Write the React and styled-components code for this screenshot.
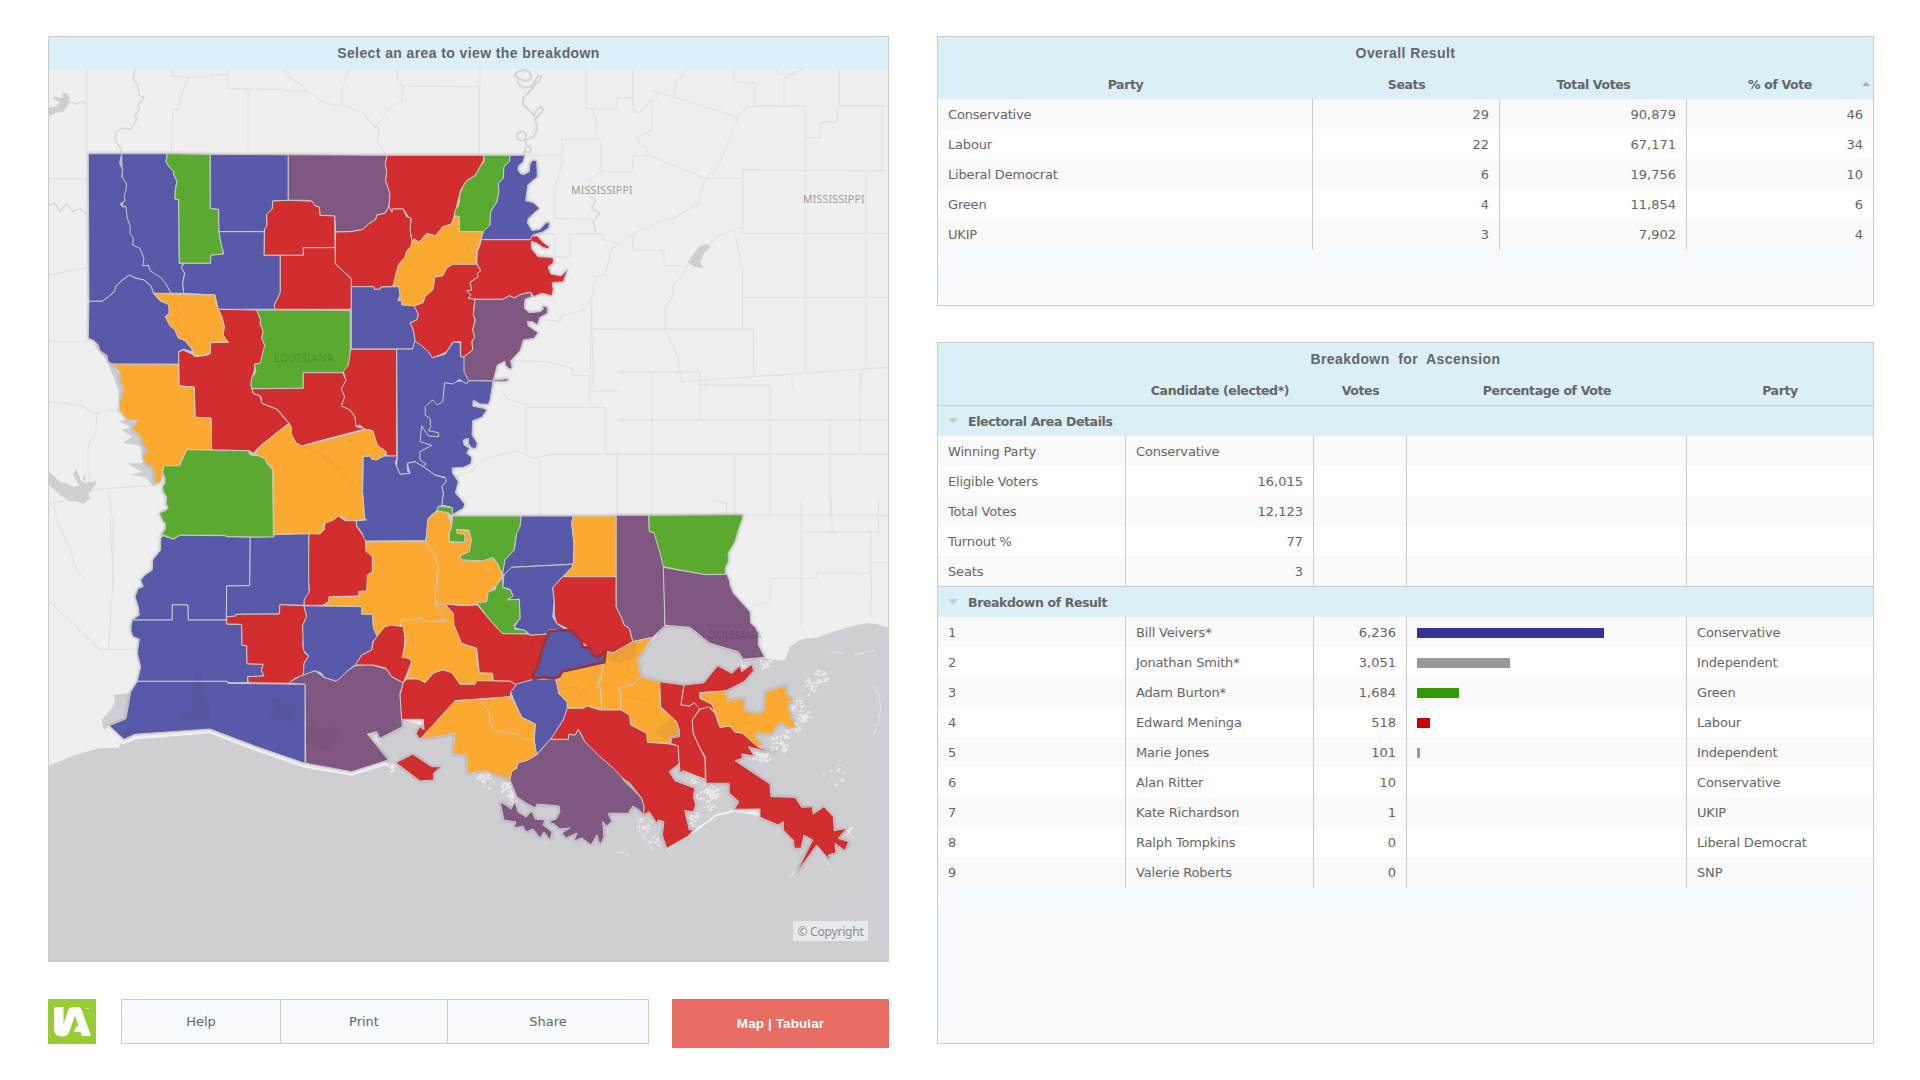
import React from "react";
import styled, { createGlobalStyle } from "styled-components";

const GlobalStyle = createGlobalStyle`
  body {
    margin: 0;
    background: #fff;
    color: #666;
    font-family: Verdana, "DejaVu Sans", sans-serif;
    font-size: 13px;
  }
`;

/* ---------- map data ---------- */

// Each outline is a list of points; a letter selects the survey sheet they are measured on.
const SHEETS = {
  A: [40, 30, 3],
  B: [460, 30, 3],
  C: [40, 340, 3],
  D: [320, 300, 3],
  E: [100, 520, 3],
  F: [360, 490, 3],
  G: [600, 500, 3],
  P: [0, 0, 1],
};

function points(outline) {
  let sheet = SHEETS.P;
  const out = [];
  const tokens = outline.trim().split(/\s+/);
  for (let i = 0; i < tokens.length; ) {
    if (SHEETS[tokens[i]]) {
      sheet = SHEETS[tokens[i]];
      i += 1;
      continue;
    }
    const x = sheet[0] + Number(tokens[i]) / sheet[2];
    const y = sheet[1] + Number(tokens[i + 1]) / sheet[2];
    out.push(`${x.toFixed(1)},${y.toFixed(1)}`);
    i += 2;
  }
  return out.join(" ");
}

const FILL = {
  blue: "#5959a9",
  red: "#d22e2f",
  green: "#5aaa31",
  orange: "#fba931",
  purple: "#805780",
};

const AREAS = [
  ["blue", "A 245 371 382 371 378 395 388 412 402 425 400 432 411 453 406 480 405 507 416 509 418 700 431 703 424 712 434 730 428 760 431 790 393 790 300 700 250 600"],
  ["blue", "A 145 371 245 371 239 400 248 420 245 440 252 450 260 462 257 485 252 500 256 512 241 522 249 532 257 528 262 565 271 590 270 610 280 625 278 645 300 655 312 685 308 708 325 705 330 722 350 735 365 745 380 765 393 790 340 790 333 768 312 750 285 744 268 735 248 750 230 766 222 786 205 800 187 814 147 814"],
  ["green", "A 382 371 510 373 511 535 536 538 537 605 543 640 551 672 512 676 512 700 418 700 416 509 405 507 406 480 411 453 400 432 402 425 388 412 378 395"],
  ["blue", "A 511 373 745 374 745 511 698 513 697 537 680 553 681 587 674 597 673 605 537 605 536 538 511 535"],
  ["purple", "A 745 374 1042 376 1036 400 1040 425 1037 452 1050 490 1047 527 1035 550 1010 555 1008 567 985 583 967 599 930 605 887 606 884 558 840 556 838 531 826 528 816 514 800 511 745 511"],
  ["red", "A 1042 376 1332 376 1330 392 1320 410 1306 436 1280 452 1262 480 1243 557 1235 582 1208 590 1187 617 1160 611 1137 637 1123 627 1116 635 1110 600 1113 565 1106 562 1090 537 1057 537 1056 547 1047 530 1050 490 1037 452 1040 425 1036 400"],
  ["green", "B 72 376 151 376 148 395 132 410 130 445 115 460 117 485 111 515 92 545 90 585 70 605 A 1258 605 1258 560 1243 557 1246 540 1257 525 1260 490 1270 468 1280 452 B 46 436 60 410 72 395"],
  ["blue", "B 151 376 194 376 190 395 175 408 174 420 180 430 190 434 208 425 210 402 218 390 230 393 232 440 203 465 197 512 220 518 238 535 205 565 202 578 216 602 240 598 258 578 268 578 266 594 248 606 220 614 212 629 62 629 70 605 90 585 92 545 111 515 117 485 115 460 130 445 132 410 148 395"],
  ["red", "B 62 629 212 629 216 618 232 618 250 638 268 650 264 656 248 652 232 640 214 634 214 655 234 680 270 682 281 686 279 700 264 710 272 732 304 738 323 717 310 755 276 758 280 778 275 798 250 790 238 792 222 800 212 787 183 793 163 804 148 797 128 808 34 808 25 800 32 795 20 782 35 780 30 757 54 740 52 730 62 722 50 700 52 665 62 640"],
  ["orange", "A 1243 558 1258 560 1258 605 B 70 605 62 629 50 665 50 703 A 1238 703 1220 715 1208 738 1185 741 1178 780 1155 800 1150 818 1130 823 1122 828 1085 825 1085 812 1074 812 1080 795 1074 770 1058 768 1075 705 1095 680 1100 663 1112 650 1123 627 1137 637 1160 611 1187 617 1208 590 1235 582"],
  ["red", "A 887 606 930 605 967 599 985 583 1008 567 1010 555 1035 550 1047 530 1056 547 1057 537 1090 537 1100 560 1113 565 1110 600 1116 635 1112 650 1100 663 1095 680 1075 705 1058 770 1022 771 1020 778 1003 778 1001 770 934 770 934 746 886 702 885 655"],
  ["red", "A 698 513 745 511 800 513 816 514 826 528 838 531 840 556 884 558 885 653 790 653 790 676 672 676 674 597 681 587 680 553 697 537"],
  ["blue", "A 537 605 673 605 672 676 721 676 721 788 703 825 705 838 535 838 525 795 431 790 428 760 434 730 424 712 431 703 418 700 512 700 512 676 551 672 543 640"],
  ["red", "A 721 676 790 676 790 653 885 653 886 702 934 746 934 838 705 838 703 825 721 788"],
  ["red", "A 1122 828 1150 818 1155 800 1178 780 1185 741 1208 738 1220 715 1238 703 B 50 703 62 722 52 730 54 740 30 757 35 780 20 782 32 795 25 805 45 808 40 855 46 870 38 900 44 920 36 935 38 960 10 982 2 980 2 935 A 1238 937 1220 965 1200 975 1177 983 1160 965 1140 945 1124 935 1120 900 1110 878 1130 870 1135 853"],
  ["blue", "A 934 770 1001 770 1003 778 1020 778 1022 771 1076 770 1080 795 1074 812 1085 812 1085 825 1122 828 1135 853 1130 870 1110 878 1120 900 1126 935 1118 957 934 957"],
  ["purple", "B 45 808 128 808 148 797 163 804 183 793 212 787 214 800 195 808 193 835 208 848 240 845 250 838 248 828 262 832 262 850 240 862 232 885 220 876 202 874 205 888 234 908 222 925 190 930 180 962 152 992 156 1012 150 1018 138 1008 134 994 112 1005 100 1050 146 1046 140 1054 25 1052 10 1030 10 982 38 960 36 935 44 920 38 900 46 870 40 855"],
  ["blue", "A 147 814 187 814 205 800 222 786 230 766 248 750 268 735 285 744 312 750 333 768 340 790 360 812 388 824 388 850 377 860 400 890 420 925 440 935 455 955 457 965 430 958 416 965 416 1003 218 1003 C 205 65 200 45 180 32 175 15 160 0 A 158 930 145 925"],
  ["red", "A 535 838 650 840 662 870 660 880 670 905 665 925 676 950 673 970 665 1000 C 660 70 645 72 642 95 635 115 632 135 640 160 660 168 666 190 710 208 747 250 720 270 690 295 660 318 640 340 628 332 515 330 513 234 465 232 463 141 417 138 416 35 430 30 455 42 465 50 505 45 511 8 565 7 A 549 915 553 890 545 860"],
  ["orange", "A 340 790 525 795 527 812 535 838 545 860 553 890 549 915 565 937 512 937 511 972 495 970 490 978 462 975 455 955 440 940 435 930 415 925 405 900 390 888 376 860 388 850 386 824 360 812"],
  ["green", "A 650 840 931 841 931 985 D 88 185 80 210 68 218 C 790 98 790 145 637 146 632 135 635 115 648 95 643 72 660 70 673 20 A 676 950 665 925 670 905 660 880 662 870"],
  ["red", "C 637 146 790 145 790 98 908 98 D 78 240 68 270 74 290 66 315 90 330 105 350 108 380 138 386 0 422 C 785 318 765 308 755 285 753 260 747 250 712 208 666 190 662 168 640 160"],
  ["red", "D 92 148 230 148 230 468 200 468 198 455 170 435 158 392 135 388 120 375 108 378 105 350 90 330 64 318 74 290 64 268 78 240 70 215 85 195"],
  ["blue", "D 446 242 519 243 510 300 505 313 480 312 460 300 458 318 490 325 500 330 485 352 458 362 456 405 472 430 468 445 455 444 445 430 445 415 430 420 432 435 448 445 440 460 455 472 452 492 430 502 396 504 398 520 415 545 406 578 434 612 430 625 395 645 395 622 365 615 370 580 365 560 378 545 375 532 345 525 308 500 295 480 295 380 312 300 366 300 374 246"],
  ["blue", "D 230 147 278 147 284 123 300 133 325 155 337 173 375 163 400 126 420 128 422 170 432 172 432 215 446 242 440 252 418 238 400 252 374 248 368 305 352 315 338 300 316 320 315 345 330 355 332 380 325 392 355 398 356 410 325 408 305 378 300 425 335 436 300 455 300 480 318 492 308 500 285 485 262 490 262 512 270 520 240 523 230 500 232 470"],
  ["orange", "C 216 72 416 73 417 138 463 141 465 232 513 234 515 330 440 329 419 377 373 377 368 395 362 425 350 432 345 425 340 385 318 370 308 350 325 330 310 315 300 285 275 268 292 242 262 240 238 210 240 180 252 150 240 120 240 95"],
  ["orange", "C 747 250 753 260 755 285 768 308 785 318 900 290 D 138 388 158 392 172 435 198 455 192 468 170 480 155 478 150 468 130 468 128 575 134 655 140 660 80 662 72 652 55 648 45 658 15 670 12 690 0 702 C 852 550 857 570 840 582 805 580 702 584 700 390 670 355 645 345 660 318 690 295"],
  ["green", "C 440 329 625 332 630 345 655 347 675 357 680 370 698 390 700 592 558 590 557 586 420 586 400 597 370 585 362 588 377 565 375 548 370 545 358 520 375 512 385 505 378 490 380 470 370 455 368 440 375 430 375 415 368 395 373 377 419 377"],
  ["blue", "D 130 470 150 468 155 478 170 480 192 468 232 468 226 490 240 523 270 520 262 490 285 485 310 500 345 525 378 535 378 545 365 560 370 580 365 615 352 632 340 640 325 655 322 700 316 722 128 723 127 700 108 675 110 662 140 660 134 655 128 575"],
  ["orange", "E 797 65 F 200 155 205 175 225 190 235 235 225 320 230 342 258 392 200 395 178 383 160 390 125 388 122 408 95 405 75 435 50 440 38 430 38 375 E 785 283 785 260 668 256 685 245 685 230 775 228 776 214 800 213 802 165 817 155 817 110 797 93"],
  ["red", "E 626 41 660 42 672 30 675 10 700 0 715 -12 735 2 768 2 770 20 788 45 797 65 797 93 817 110 817 155 802 165 800 213 776 214 775 228 687 230 685 245 668 256 612 256 612 240 628 212 625 180"],
  ["blue", "E 190 47 220 58 240 46 378 47 378 50 451 52 449 197 380 198 379 300 265 300 263 255 217 254 217 300 97 300 118 285 115 260 105 230 115 205 130 200 122 180 135 165 157 150 158 120 182 90 182 55"],
  ["blue", "E 451 52 521 51 522 44 626 41 626 200 628 215 612 240 612 256 540 254 538 282 408 283 407 290 379 290 380 198 449 197"],
  ["blue", "E 97 300 217 300 217 254 263 255 265 300 379 300 380 312 425 313 426 376 440 377 441 431 490 433 484 450 492 468 443 470 443 488 383 488 382 484 112 484 122 440 112 400 118 357 100 350 93 335 93 320"],
  ["purple", "E 562 490 610 462 645 452 672 472 707 483 745 450 766 437 810 433 858 447 F 78 535 95 560 130 578 120 610 127 710 60 745 50 725 22 732 85 810 0 837 E 755 755 617 730 615 493"],
  ["red", "E 380 290 407 288 408 283 538 282 540 254 612 257 620 290 608 315 612 345 608 370 615 400 626 408 612 430 610 465 585 475 565 490 445 488 443 470 492 468 484 450 490 433 441 431 440 377 426 376 425 313 380 312"],
  ["blue", "E 612 257 785 260 785 283 817 283 820 325 832 350 818 365 815 390 785 405 766 435 745 450 720 475 707 483 672 472 665 460 645 452 610 465 612 430 626 408 610 390 608 315 620 290"],
  ["red", "E 766 435 785 405 815 390 820 365 F 50 440 75 410 95 405 130 410 135 445 130 500 150 505 155 515 130 578 95 560 78 535 40 525 0 525"],
  ["blue", "E 112 484 382 484 383 490 615 493 615 730 470 680 330 627 105 643 72 658 28 617 78 596 92 515"],
  ["orange", "F 122 408 125 388 160 390 178 383 200 395 258 392 225 342 255 342 280 370 282 405 305 460 350 475 350 505 358 548 398 550 400 572 345 583 298 583 290 570 270 545 245 540 222 548 195 578 175 567 140 567 155 515 145 505 126 502 138 455 130 410"],
  ["red", "F 130 578 140 567 175 567 195 578 222 548 250 540 275 548 300 583 345 583 350 572 450 573 470 585 452 607 452 620 285 632 240 695 180 748 168 730 180 710 192 720 190 688 125 688 120 615"],
  ["green", "F 278 78 484 78 480 110 468 140 463 180 435 210 428 255 412 220 400 203 370 213 305 210 296 195 328 180 334 150 326 120 290 118 292 130 315 133 315 157 268 155 268 130 275 110"],
  ["orange", "F 203 90 230 63 262 68 275 110 266 130 268 157 315 157 315 132 292 130 290 118 328 122 334 150 328 185 300 198 305 210 370 213 395 203 412 220 428 258 405 290 385 305 378 335 345 345 310 345 230 342 225 320 235 235 225 190 205 175 198 152"],
  ["green", "F 235 48 278 54 276 78 265 68 230 62"],
  ["blue", "F 484 78 640 78 635 100 642 160 640 222 455 232 432 255 428 250 435 210 463 180 470 130 480 110"],
  ["purple", "F 768 76 866 76 868 123 885 130 905 200 912 230 914 408 878 442 818 455 808 415 792 405 785 385 768 350"],
  ["orange", "F 640 78 768 78 768 260 608 260 640 225 642 160 635 100"],
  ["green", "G 147 46 428 44 427 58 418 80 405 125 384 160 385 185 376 205 377 223 315 224 190 200 180 160 162 98 148 95"],
  ["purple", "G 190 202 315 224 380 223 388 240 390 255 400 280 450 335 452 370 465 380 475 400 475 435 494 472 430 478 415 455 330 430 270 382 195 376"],
  ["blue", "F 455 232 640 223 635 232 608 260 578 293 583 330 578 380 590 400 615 418 565 420 562 432 512 436 500 425 462 412 480 385 478 328 445 330 458 315 450 298 428 292 432 255"],
  ["green", "F 428 260 428 292 450 300 460 318 442 330 478 328 480 385 462 405 465 418 495 420 502 432 427 431 390 390 350 338 380 335 385 305 405 300 408 288"],
  ["red", "F 608 260 768 260 768 350 785 385 792 405 808 415 818 455 760 488 735 484 708 505 690 478 665 455 630 420 590 400 583 375 583 330 578 293"],
  ["red", "F 255 342 310 347 352 345 388 388 427 431 502 432 512 436 562 432 545 480 538 515 525 540 520 568 470 585 450 573 400 572 398 550 358 548 350 475 305 460 282 405 280 370"],
  ["blue", "F 470 582 520 568 570 567 590 570 597 612 622 636 622 662 610 690 575 745 528 795 522 750 526 702 485 682 470 650 452 607"],
  ["orange", "F 605 548 733 520 722 560 712 582 722 600 725 658 680 648 672 655 622 652 622 636 597 612 588 570 605 560"],
  ["orange", "F 735 487 760 488 818 455 878 442 832 510 842 560 820 583 775 595 783 608 783 660 735 658 725 655 722 600 712 582 722 575 728 530"],
  ["orange", "F 842 560 898 575 902 655 955 690 955 735 930 742 930 760 862 757 860 730 812 705 808 675 783 660 783 608 775 595 820 583"],
  ["orange", "F 285 632 358 628 452 620 470 650 485 682 526 702 523 750 530 795 500 812 475 818 470 835 455 845 450 870 375 842 322 850 320 795 278 793 285 730 180 748"],
  ["purple", "F 530 795 570 748 625 748 626 733 645 735 655 718 675 755 720 795 780 840 790 870 G 125 895 133 920 130 945 118 930 98 918 85 940 25 940 35 965 20 978 8 965 12 1010 P 600 845 597 835 591 845 582 838 574 841 577 833 566 838 562 833 570 828 560 829 554 824 548 822 556 819 560 812 559 806 537 804 535 808 526 803 517 797 510 780 F 455 845 470 835 475 818 500 812"],
  ["purple", "P 500 802 506 805 511 809 515 802 518 812 526 817 532 811 535 819 545 820 543 825 552 832 550 840 544 832 540 838 533 829 526 832 523 826 514 828 516 822 504 820"],
  ["red", "F 622 655 672 655 680 648 720 660 783 660 808 675 812 705 860 730 862 757 G 210 732 235 738 238 790 208 815 225 842 285 865 280 890 287 915 280 935 254 932 268 990 282 988 265 1008 200 1045 187 1005 192 965 175 960 170 970 148 935 130 945 133 920 125 895 90 850 68 835 40 805 0 770 F 675 755 655 718 645 735 626 733 625 748 572 748 610 690"],
  ["red", "G 179 545 252 555 243 614 268 618 283 608 300 625 277 660 280 700 300 745 315 775 316 838 250 812 240 818 234 738 212 730 215 714 238 710 238 690 230 665 182 620"],
  ["red", "G 252 555 312 548 353 497 395 520 420 497 425 515 455 493 461 512 432 545 378 572 300 578 300 595 340 615 345 635 330 622 300 628 283 608 268 618 243 614"],
  ["red", "G 300 628 325 620 345 640 360 682 390 678 405 697 435 700 475 742 527 760 460 745 445 740 463 768 425 762 428 775 405 782 510 852 513 890 585 892 605 922 637 920 640 942 672 920 700 950 703 992 740 985 715 1015 746 1025 735 1052 705 1030 708 1058 685 1065 690 1082 650 1035 587 1122 638 1020 612 1005 603 1045 583 1045 580 1020 550 990 550 965 535 975 480 952 480 927 403 928 417 905 388 880 387 850 318 850 316 770 300 745 280 700 277 660"],
  ["orange", "G 300 578 375 574 385 602 432 595 433 632 475 642 492 632 497 575 556 557 560 585 582 602 563 608 574 655 588 682 570 685 540 665 515 702 470 698 465 705 485 735 475 742 425 698 405 697 390 678 360 682 345 635 335 612 300 595"],
  ["red", "F 108 818 158 792 215 830 243 830 220 850 222 870 180 873"],
];

const SELECTED = "F 567 424 600 421 632 420 665 455 668 470 690 475 700 495 712 503 737 483 733 517 605 545 600 558 583 566 550 562 520 567 522 545 530 535 538 515 545 480";

const SEA = "P 48 766 75 755 100 748 118 748 122 742 E 105 652 330 636 470 690 615 738 700 700 F 127 690 285 732 450 700 840 600 G 110 480 195 376 270 382 330 430 415 455 430 480 500 474 540 482 556 478 570 440 595 422 620 415 650 413 700 395 760 377 800 370 830 372 866 384 P 889 962 48 962";

const LAKES = [
  "E 40 525 90 518 88 540 78 596 40 612 30 640 10 625 5 600 35 565 45 545",
  "C 160 10 200 35 240 110 256 150 262 240 300 255 330 330 352 430 340 440 318 412 272 405 305 395 262 370 310 368 300 318 250 308 276 290 245 270 272 262 235 242 262 240 238 205 235 150 200 60",
  "C 27 395 60 425 85 432 100 440 118 437 100 405 108 388 125 425 142 430 128 418 134 400 138 430 168 422 165 438 145 460 150 478 130 492 110 484 90 484 60 465 27 435",
  "A 27 235 50 228 60 215 40 208 42 200 70 204 66 190 80 190 88 205 85 225 70 245 45 250 27 258",
  "B 683 697 705 665 720 648 740 643 753 650 735 665 720 695 732 715 705 712",
];

const COUNTY_LINES = [
  "A 141 117 141 371", "A 27 446 141 446", "A 27 735 141 713", "A 27 935 145 935",
  "A 395 117 395 137 445 142 515 140 515 134 562 134", "A 445 142 425 195 413 240 398 240 394 371",
  "A 562 117 564 177 725 178 760 185 800 182 830 200 845 215 890 228 910 222 940 238 970 250 1005 292 1018 295 1012 335 1038 373",
  "A 625 177 624 373", "A 733 117 745 140 780 160 800 182", "A 930 117 905 180 905 222",
  "A 1072 117 1072 150 1088 168 1290 170", "A 1088 168 1085 212 1040 240 1030 265 1005 292",
  "B 0 170 60 170 60 117", "B 58 170 58 376", "B 378 117 378 236 470 236 470 204 518 204 518 117",
  "B 395 236 412 275 405 300 415 328 307 328 307 400 285 470 285 565 398 567",
  "B 424 330 424 425 390 450 390 500", "B 518 204 518 238 535 250 555 230 570 215 590 210 595 190 575 180",
  "B 590 185 835 262 862 228 1035 228 1035 1030", "B 424 425 518 425 518 378 565 375 735 445 845 445",
  "B 835 262 800 345 775 410 735 445 715 520 650 560 590 580 520 612 455 655 435 735 405 740 395 808 400 1080",
  "B 575 200 575 300 545 315 530 325 540 345 560 350 565 375", "B 645 200 645 155 675 130 678 117",
  "B 822 117 822 155 885 160 885 228", "B 950 117 950 130 990 132 1030 117", "B 973 228 973 145 1010 130",
  "B 1138 117 1138 228 1284 228", "B 1132 228 1132 275 1082 277 1080 323 1036 323", "B 1266 228 1266 420",
  "B 848 420 1200 422 1284 422", "B 848 420 848 610 1284 610", "B 1218 428 1218 1010", "B 848 802 1284 802",
  "B 845 590 770 620 740 650", "B 825 610 847 720 847 895", "B 398 897 880 897 882 1040",
  "B 518 612 518 660 612 662 612 707 685 707 640 770 640 800 615 830 615 900 655 980 665 1055 1284 1012",
  "B 160 992 260 995 335 1015 338 1037 388 1037", "B 200 376 307 376", "B 240 612 285 612 285 680 330 682 330 612 425 612 430 628 470 640",
  "B 395 808 370 840 300 860 300 875 260 870", "B 737 1050 737 1080", "B 997 1035 997 1080", "B 1205 1020 1205 1080",
  "D 545 270 560 295 618 315 618 460", "D 618 322 855 322 855 460", "D 815 0 808 318", "D 808 273 900 273", "D 818 88 900 88",
  "D 408 530 450 515 490 480 540 465 590 452 640 475 700 462 900 462", "D 650 475 660 490 660 645", "D 892 462 892 645",
  "P 617 372 700 372 700 385 770 385", "P 700 372 700 420 617 420", "P 770 385 770 515", "P 700 420 888 420", "P 830 420 830 515", "P 617 454 888 454",
  "P 652 372 652 515", "P 735 454 735 515", "P 860 372 860 454",
  "P 617 515 888 515", "G 335 0 380 10 378 44", "G 603 0 603 380", "G 693 0 697 95", "G 605 96 835 96 835 0",
  "G 812 96 815 350", "G 512 235 650 235 652 218 812 220", "G 512 235 510 305 465 315 455 335", "G 835 48 866 48", "G 815 188 866 188",
  "C 27 185 120 195 170 222 210 207 240 215", "C 170 222 168 280 145 310 145 400 150 440",
  "C 27 490 90 480 165 448 350 435", "C 205 448 220 560 218 720", "C 40 500 60 560 95 640 105 680 135 720",
  "E 30 0 40 180 25 388", "E 0 388 105 388", "P 48 600 100 650",
];

const RIVERS = [
  "A 285 117 280 145 295 170 297 195 312 203 295 222 298 238 285 255 290 270 272 298 245 295 228 305 225 330 243 358 243 371",
  "A 27 525 45 520 60 545 80 520 100 545 120 535 141 552", "A 85 215 105 222 125 215 138 222",
  "B 390 500 408 510 395 535 420 550 400 575 408 605",
];

const MEANDER =
  "M514 77q2 -6 9 -7q9 0 8 9q-6 4 -12 -1q-5 -2 -2 -4M518 78q-2 6 5 9q7 2 11 -4q4 -9 7 -7q1 5 -6 8q-3 6 -9 11q-5 5 -2 11q7 5 10 10q2 -8 7 -9q4 2 -1 7q-5 5 -5 6q4 8 -1 16q-6 4 -10 3M517 136a4.500 4.500 0 1 0 9 0a4.500 4.500 0 1 0 -9 0M525 140l2 6q6 2 3 6q-6 1 -5 -4l-1 7";

const GHOSTS = [
  "E 285 460 302 458 305 480 312 520 330 560 325 598 290 605 240 600 235 590 275 575 280 530",
  "E 505 535 530 532 545 545 590 550 592 568 575 575 592 600 575 612 520 595 505 580 525 570",
  "E 615 620 640 612 660 630 700 620 718 640 712 670 680 692 640 680 618 665",
  "G 20 450 80 420 110 430 110 470 60 490 20 480",
  "G 180 680 215 655 238 690 235 715 200 720 165 695",
];

const GHOST_LINES = [
  "A 400 800 415 850 405 880 430 910 455 930 470 955",
  "C 511 35 570 70 610 110 632 120", "C 785 318 830 335 900 390", "D 0 460 60 500 75 535 130 575 180 530 215 545 240 520",
  "F 455 455 520 450 500 500 560 515 565 540", "F 590 600 650 590 660 615 705 580", "F 785 620 840 625 880 640",
  "G 310 690 340 740 400 790 470 830 520 900 600 960 640 1010",
];

const BARRIER_ISLANDS =
  "G 50 1055 95 1068 M G 648 1040 672 1072 695 1110 M G 570 1132 600 1100 640 1040 M G 695 455 730 460 M G 765 465 820 450 M G 820 555 838 590 842 625 834 670 820 705 M G 120 960 118 990 135 1020 160 1050";

// Clusters of wetland islets: centre, spread, count.
const MARSHES = [
  [694, 773, 12, 34], [712, 790, 10, 26], [690, 818, 12, 26], [705, 800, 14, 30], [780, 743, 11, 38], [792, 728, 8, 24],
  [802, 715, 9, 24], [810, 685, 10, 26], [820, 678, 8, 24], [795, 705, 7, 12], [752, 752, 9, 28], [762, 757, 7, 20],
  [742, 667, 10, 22], [765, 663, 8, 14], [484, 777, 12, 34], [505, 786, 9, 26], [512, 800, 8, 16], [376, 740, 6, 10],
  [392, 765, 7, 14], [645, 825, 10, 20], [655, 840, 7, 12], [837, 770, 16, 10], [848, 832, 6, 8], [378, 716, 6, 8],
];

function wetlands() {
  let seed = 7;
  const next = () => {
    seed = (seed * 16807) % 2147483647;
    return seed / 2147483647;
  };
  return MARSHES.map(([cx, cy, spread, count]) => {
    let d = "";
    for (let i = 0; i < count; i += 1) {
      const x = cx + (next() + next() - 1) * spread;
      const y = cy + (next() + next() - 1) * spread;
      const w = 0.8 + next() * 2.6;
      const h = 0.6 + next() * 1.8;
      d += `M${x.toFixed(1)} ${y.toFixed(1)}l${w.toFixed(1)} ${(-h * 0.5).toFixed(1)} ${(w * 0.3).toFixed(1)} ${h.toFixed(1)} ${(-w).toFixed(1)} ${(h * 0.6).toFixed(1)}z`;
    }
    return d;
  }).join("");
}

/* ---------- table data ---------- */

const PARTY_RESULTS = [
  ["Conservative", "29", "90,879", "46"],
  ["Labour", "22", "67,171", "34"],
  ["Liberal Democrat", "6", "19,756", "10"],
  ["Green", "4", "11,854", "6"],
  ["UKIP", "3", "7,902", "4"],
];

const AREA_DETAILS = [
  ["Winning Party", "Conservative", false],
  ["Eligible Voters", "16,015", true],
  ["Total Votes", "12,123", true],
  ["Turnout %", "77", true],
  ["Seats", "3", true],
];

const CANDIDATES = [
  ["Bill Veivers*", "6,236", "Conservative", 186.6, "#333399"],
  ["Jonathan Smith*", "3,051", "Independent", 93.3, "#999999"],
  ["Adam Burton*", "1,684", "Green", 41.6, "#339900"],
  ["Edward Meninga", "518", "Labour", 13, "#cc0000"],
  ["Marie Jones", "101", "Independent", 2.6, "#999999"],
  ["Alan Ritter", "10", "Conservative", 0, "none"],
  ["Kate Richardson", "1", "UKIP", 0, "none"],
  ["Ralph Tompkins", "0", "Liberal Democrat", 0, "none"],
  ["Valerie Roberts", "0", "SNP", 0, "none"],
];

/* ---------- styles ---------- */

const Page = styled.main`
  box-sizing: border-box;
  width: 1920px;
  height: 1080px;
  padding: 36px 46px 32px 48px;
  display: flex;
  justify-content: space-between;
  overflow: hidden;
`;

const LeftColumn = styled.div`
  width: 841px;
  display: flex;
  flex-direction: column;
  gap: 37px;
`;

const RightColumn = styled.div`
  width: 937px;
  display: flex;
  flex-direction: column;
  gap: 36px;
`;

const Panel = styled.section`
  box-sizing: border-box;
  height: ${(p) => p.$height}px;
  border: 1px solid #ccc;
  background: #f7fbfe;
  display: flex;
  flex-direction: column;
  position: relative;
`;

const PanelTitle = styled.h2`
  flex: none;
  margin: 0;
  height: 32px;
  background: #daf0f6;
  text-align: center;
  white-space: pre;
  font: bold 14px / 33px Arial, "Liberation Sans", sans-serif;
  letter-spacing: 0.4px;
`;

const MapCanvas = styled.svg`
  display: block;
  width: 839px;
  height: 892px;
`;

const Territory = styled.g`
  filter: drop-shadow(0 0 1.5px rgba(0, 0, 0, 0.26));
`;

const MapLabel = styled.text`
  font: 10.5px "Noto Sans", sans-serif;
  letter-spacing: ${(p) => (p.$dim ? 0.55 : 0.2)}px;
  fill: ${(p) => (p.$dim ? "rgba(40,40,40,.25)" : "#9c9c9c")};
`;

const Copyright = styled.div`
  position: absolute;
  right: 20px;
  bottom: 20px;
  width: 75px;
  height: 20px;
  background: #e8e9ec;
  color: #8c8c8c;
  font: 12px / 21px "Noto Sans", sans-serif;
  letter-spacing: -0.2px;
  text-align: center;
`;

const Footer = styled.footer`
  display: flex;
  align-items: flex-start;
`;

const Logo = styled.svg`
  width: 48px;
  height: 45px;
  margin-right: 25px;
`;

const ButtonBar = styled.nav`
  box-sizing: border-box;
  display: grid;
  grid-template-columns: 159px 167px 200px;
  width: 528px;
  height: 45px;
  border: 1px solid #ccc;
  margin-right: 23px;
`;

const BarButton = styled.button`
  border: 0;
  border-right: 1px solid #ccc;
  padding: 0;
  background: #f7fbfe;
  color: #666;
  font: inherit;
  &:last-child {
    border-right: 0;
  }
`;

const ModeButton = styled.button`
  width: 217px;
  height: 49px;
  border: 0;
  padding: 0;
  background: #e76c63;
  color: #fff;
  font: bold 13.5px Arial, "Liberation Sans", sans-serif;
  letter-spacing: 0.1px;
`;

const HeadRow = styled.div`
  flex: none;
  display: grid;
  grid-template-columns: ${(p) => p.$columns};
  height: 30px;
  background: #daf0f6;
  border-bottom: ${(p) => (p.$ruled ? "1px solid #ccc" : "0")};
`;

const HeadCell = styled.div`
  position: relative;
  text-align: center;
  line-height: 32px;
  font-weight: bold;
  font-size: 12.5px;
  letter-spacing: -0.38px;
`;

const SortArrow = styled.i`
  position: absolute;
  right: 3px;
  top: 13px;
  border: 4px solid transparent;
  border-top: 0;
  border-bottom-color: #aaa;
`;

const Row = styled.div`
  flex: none;
  display: grid;
  grid-template-columns: ${(p) => p.$columns};
  height: 30px;
  background: ${(p) => (p.$shaded ? "#fafafa" : "#fff")};
`;

const Cell = styled.div`
  box-sizing: border-box;
  padding: 0 10px;
  line-height: 31px;
  border-right: 1px solid #ccc;
  text-align: ${(p) => (p.$numeric ? "right" : "left")};
  letter-spacing: ${(p) => (p.$numeric ? "0" : "-0.17px")};
  &:last-child {
    border-right: 0;
  }
`;

const BarCell = styled(Cell)`
  display: flex;
  align-items: center;
`;

const Bar = styled.div`
  height: 10px;
`;

const GroupRow = styled.div`
  flex: none;
  box-sizing: border-box;
  display: flex;
  align-items: center;
  gap: 10px;
  height: ${(p) => (p.$ruled ? 31 : 30)}px;
  padding-left: 10px;
  background: #daf0f6;
  border-top: ${(p) => (p.$ruled ? "1px solid #ccc" : "0")};
  font-weight: bold;
  font-size: 12.5px;
  letter-spacing: -0.38px;
  line-height: 31px;
`;

const Caret = styled.i`
  border: 5.5px solid transparent;
  border-top: 6px solid #ccc;
  border-bottom: 0;
`;

const OVERALL_COLUMNS = "375px 187px 187px 186px";
const BREAKDOWN_COLUMNS = "188px 188px 93px 280px 186px";

/* ---------- components ---------- */

function ElectionMap() {
  return (
    <MapCanvas viewBox="49 69 839 892">
      <rect x="49" y="69" width="839" height="892" fill="#efefef" />
      <g fill="none" stroke="#e2e2e2" strokeWidth="1.3">
        {COUNTY_LINES.map((l, i) => (
          <polyline key={i} points={points(l)} />
        ))}
      </g>
      <g fill="none" stroke="#d6d6d8" strokeWidth="1.4">
        {RIVERS.map((l, i) => (
          <polyline key={i} points={points(l)} />
        ))}
        <path d={MEANDER} strokeWidth="2" stroke="#d4d4d7" strokeLinejoin="round" />
      </g>
      <polygon points={points(SEA)} fill="#cfced3" />
      <g fill="#cfced3">
        {LAKES.map((l, i) => (
          <polygon key={i} points={points(l)} />
        ))}
      </g>
      <g fill="none" stroke="#e4e4e6" strokeWidth="1.3" strokeDasharray="9 1 3 2">
        {BARRIER_ISLANDS.split("M").map((l, i) => (
          <polyline key={i} points={points(l)} />
        ))}
      </g>
      <path d={wetlands()} fill="#ebebec" />
      <polyline points={points("E 22 622 70 665 110 650 330 632 470 686 615 736 755 760 860 726")} fill="none" stroke="#f1f1f1" strokeWidth="5" />
      <polyline points={points("G 200 1050 268 1006 350 945 400 934")} fill="none" stroke="#efefef" strokeWidth="2" />
      <polygon points={points("G 385 932 480 925 480 950 455 944")} fill="#efefef" />
      <Territory stroke="#c9c9c9" strokeWidth="1" strokeLinejoin="round">
        {AREAS.map(([color, outline], i) => (
          <polygon key={i} points={points(outline)} fill={FILL[color]} />
        ))}
        <polyline points={points("F 358 628 388 665 392 700 405 722 475 733 495 748 523 750")} fill="none" />
      </Territory>
      <g fill="rgba(60,50,80,.08)">
        {GHOSTS.map((l, i) => (
          <polygon key={i} points={points(l)} />
        ))}
      </g>
      <g fill="none" stroke="rgba(60,50,60,.06)" strokeWidth="1.3">
        {GHOST_LINES.map((l, i) => (
          <polyline key={i} points={points(l)} />
        ))}
      </g>
      <polygon points={points(SELECTED)} fill="#5959a9" stroke="#953535" strokeWidth="2.6" strokeLinejoin="round" />
      <MapLabel x="571" y="193.5">MISSISSIPPI</MapLabel>
      <MapLabel x="803" y="202.5">MISSISSIPPI</MapLabel>
      <MapLabel $dim x="274" y="362">LOUISIANA</MapLabel>
      <MapLabel $dim x="702" y="639">LOUISIANA</MapLabel>
    </MapCanvas>
  );
}

function BrandMark() {
  return (
    <Logo viewBox="0 0 48 45">
      <rect width="48" height="45" fill="#99cc33" />
      <path
        fill="#fff"
        d="M6 10q0-2 2-2h7.500v17l5-14.500q1-2.500 4-2.500h6q2 0 3 2.500l9.500 26.500h-9l-1.500-4h-6.500l2-5.500h2.500l-3.500-11-6 17q-1.500 4-7 4-8 0-8-8z"
      />
      <path d="M37.500 9.500h3.500" stroke="#d6ebac" strokeWidth="1" />
    </Logo>
  );
}

function OverallPanel() {
  return (
    <Panel $height={270}>
      <PanelTitle>Overall Result</PanelTitle>
      <HeadRow $columns={OVERALL_COLUMNS}>
        <HeadCell>Party</HeadCell>
        <HeadCell>Seats</HeadCell>
        <HeadCell>Total Votes</HeadCell>
        <HeadCell>
          % of Vote
          <SortArrow />
        </HeadCell>
      </HeadRow>
      {PARTY_RESULTS.map((row, i) => (
        <Row key={row[0]} $columns={OVERALL_COLUMNS} $shaded={i % 2 === 0}>
          {row.map((value, c) => (
            <Cell key={c} $numeric={c > 0}>
              {value}
            </Cell>
          ))}
        </Row>
      ))}
    </Panel>
  );
}

function BreakdownPanel() {
  return (
    <Panel $height={702}>
      <PanelTitle>{"Breakdown  for  Ascension"}</PanelTitle>
      <HeadRow $columns={BREAKDOWN_COLUMNS} $ruled>
        <HeadCell />
        <HeadCell>Candidate (elected*)</HeadCell>
        <HeadCell>Votes</HeadCell>
        <HeadCell>Percentage of Vote</HeadCell>
        <HeadCell>Party</HeadCell>
      </HeadRow>
      <GroupRow>
        <Caret />
        Electoral Area Details
      </GroupRow>
      {AREA_DETAILS.map(([label, value, numeric], i) => (
        <Row key={label} $columns={BREAKDOWN_COLUMNS} $shaded={i % 2 === 0}>
          <Cell>{label}</Cell>
          <Cell $numeric={numeric}>{value}</Cell>
          <Cell />
          <Cell />
          <Cell />
        </Row>
      ))}
      <GroupRow $ruled>
        <Caret />
        Breakdown of Result
      </GroupRow>
      {CANDIDATES.map(([name, votes, party, width, color], i) => (
        <Row key={name} $columns={BREAKDOWN_COLUMNS} $shaded={i % 2 === 0}>
          <Cell>{i + 1}</Cell>
          <Cell>{name}</Cell>
          <Cell $numeric>{votes}</Cell>
          <BarCell>
            <Bar style={{ width, background: color }} />
          </BarCell>
          <Cell>{party}</Cell>
        </Row>
      ))}
    </Panel>
  );
}

export default function App() {
  return (
    <>
      <GlobalStyle />
      <Page>
        <LeftColumn>
          <Panel $height={926}>
            <PanelTitle>Select an area to view the breakdown</PanelTitle>
            <ElectionMap />
            <Copyright>© Copyright</Copyright>
          </Panel>
          <Footer>
            <BrandMark />
            <ButtonBar>
              <BarButton>Help</BarButton>
              <BarButton>Print</BarButton>
              <BarButton>Share</BarButton>
            </ButtonBar>
            <ModeButton>Map | Tabular</ModeButton>
          </Footer>
        </LeftColumn>
        <RightColumn>
          <OverallPanel />
          <BreakdownPanel />
        </RightColumn>
      </Page>
    </>
  );
}
